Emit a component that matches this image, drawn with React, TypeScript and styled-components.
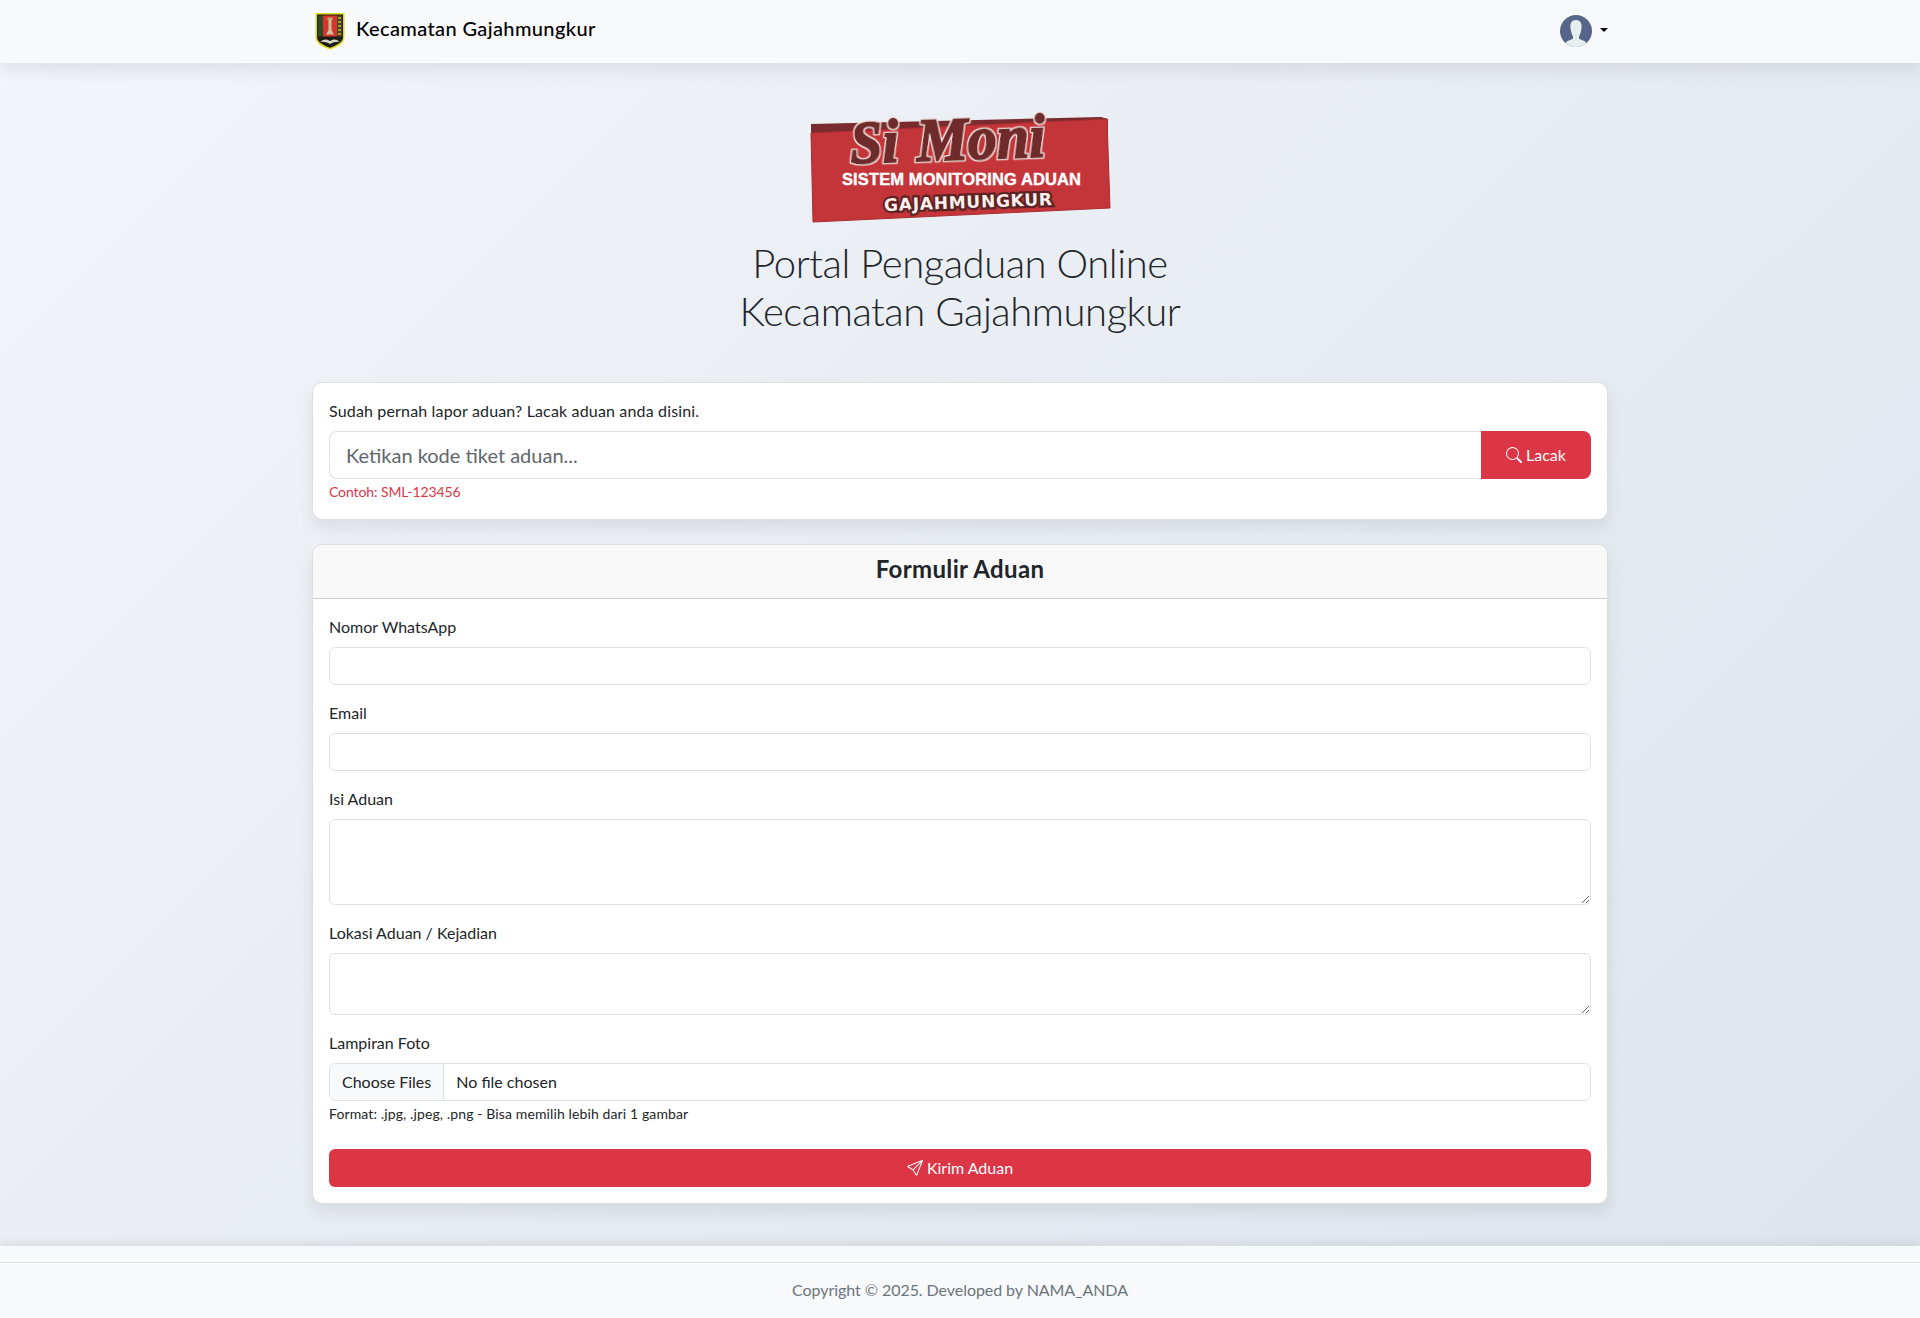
import { createGlobalStyle, styled } from "styled-components";
import { BsSearch, BsSend } from "react-icons/bs";

const GlobalStyle = createGlobalStyle`
  * { box-sizing: border-box; }
  html, body { margin: 0; padding: 0; }
  body {
    min-height: 1318px;
    font-family: Lato, "Noto Sans", sans-serif;
    font-size: 16px;
    line-height: 24px;
    color: #212529;
    background: linear-gradient(135deg, #f2f5f9 0%, #dde4ec 100%);
  }
  input, textarea, button { font-family: inherit; letter-spacing: inherit; }
`;

const Navbar = styled.nav`
  height: 63px;
  background: #f8f9fa;
  box-shadow: 0 8px 16px rgba(0, 0, 0, 0.08);
`;

const NavInner = styled.div`
  width: 1320px;
  height: 100%;
  margin: 0 auto;
  padding: 0 12px 0 15px;
  display: flex;
  align-items: center;
  justify-content: space-between;
`;

const Brand = styled.a`
  display: flex;
  align-items: center;
  gap: 11px;
  font-size: 20px;
  font-weight: 500;
  letter-spacing: 0.38px;
  color: #000;
  margin-bottom: 2px;
`;

const BrandName = styled.span`
  margin-bottom: 6px;
`;

const UserMenu = styled.div`
  display: flex;
  align-items: center;
  gap: 8px;
  margin-bottom: 2px;
`;

const Caret = styled.span`
  width: 0;
  height: 0;
  margin-bottom: 2px;
  border-top: 4.8px solid #000;
  border-left: 4.8px solid transparent;
  border-right: 4.8px solid transparent;
`;

const Main = styled.main`
  width: 1320px;
  margin: 0 auto;
  padding: 37px 12px 42px;
`;

const Hero = styled.header`
  display: flex;
  flex-direction: column;
  align-items: center;
  margin-bottom: 46px;
`;

const Title = styled.h1`
  margin: 9px 0 1px;
  font-size: 40px;
  line-height: 48px;
  font-weight: 300;
  letter-spacing: -0.45px;
  text-align: center;
`;

const Card = styled.section`
  background: #fff;
  border: 1px solid rgba(0, 0, 0, 0.125);
  border-radius: 10px;
  box-shadow: 0 8px 16px rgba(0, 0, 0, 0.08);
  overflow: hidden;
  & + & { margin-top: 24px; }
`;

const CardHeader = styled.div`
  height: 54px;
  padding-bottom: 6px;
  background: #f8f8f8;
  border-bottom: 1px solid rgba(0, 0, 0, 0.175);
  display: flex;
  align-items: center;
  justify-content: center;
`;

const CardTitle = styled.h2`
  margin: 0;
  font-size: 24px;
  font-weight: 700;
  letter-spacing: 0.35px;
  line-height: 29px;
`;

const CardBody = styled.div`
  padding: 16px;
`;

const Label = styled.label`
  display: block;
  margin-bottom: 8px;
`;

const IntroLabel = styled(Label)`
  letter-spacing: 0.16px;
`;

const Field = styled.div`
  margin-bottom: 16px;
`;

const SearchGroup = styled.div`
  display: flex;
  height: 48px;
`;

const SearchInput = styled.input`
  flex: 1;
  min-width: 0;
  padding: 8px 16px;
  font-size: 20px;
  color: #212529;
  border: 1px solid #dee2e6;
  border-right: 0;
  border-radius: 8px 0 0 8px;
  background: #fff;
  outline: none;
  &::placeholder { color: #5f666c; opacity: 1; }
`;

const SearchButton = styled.button`
  width: 110px;
  padding: 0 0 1px;
  display: flex;
  align-items: center;
  justify-content: center;
  gap: 4px;
  border: 0;
  border-radius: 0 8px 8px 0;
  background: #dc3545;
  color: #fff;
  font-size: 16px;
`;

const Hint = styled.small<{ $danger?: boolean }>`
  display: block;
  margin: 3px 0 2px;
  font-size: 14px;
  line-height: 19px;
  letter-spacing: ${p => (p.$danger ? "-0.1px" : "0.12px")};
  color: ${p => (p.$danger ? "#dc3545" : "#212529")};
`;

const Input = styled.input`
  display: block;
  width: 100%;
  height: 38px;
  padding: 6px 12px;
  font-size: 16px;
  color: #212529;
  background: #fff;
  border: 1px solid #dee2e6;
  border-radius: 6px;
  outline: none;
`;

const TextArea = styled.textarea<{ $height: number }>`
  display: block;
  width: 100%;
  height: ${p => p.$height}px;
  padding: 6px 12px;
  font-size: 16px;
  color: #212529;
  background: #fff;
  border: 1px solid #dee2e6;
  border-radius: 6px;
  outline: none;
  resize: vertical;
`;

const FileInput = styled.input`
  display: block;
  width: 100%;
  height: 38px;
  padding: 6px 12px;
  font-size: 16px;
  line-height: 24px;
  color: #212529;
  background: #fff;
  border: 1px solid #dee2e6;
  border-radius: 6px;
  overflow: hidden;
  outline: none;
  &::file-selector-button {
    height: 38px;
    margin: -7px 12px -6px -12px;
    padding: 6px 12px;
    color: #212529;
    background: #f8f9fa;
    border: 0;
    border-right: 1px solid #dee2e6;
    border-radius: 0;
    font: inherit;
    letter-spacing: inherit;
  }
`;

const SubmitButton = styled.button`
  width: 100%;
  height: 38px;
  margin-top: 26px;
  padding: 0 0 1px;
  display: flex;
  align-items: center;
  justify-content: center;
  gap: 4px;
  border: 0;
  border-radius: 6px;
  background: #dc3545;
  color: #fff;
  font-size: 16px;
`;

const Footer = styled.footer`
  height: 73px;
  padding-top: 16px;
  background: #f8f9fa;
  box-shadow: 0 -3px 10px rgba(0, 0, 0, 0.08);
`;

const FooterText = styled.div`
  height: 57px;
  padding-bottom: 2px;
  border-top: 1px solid #dee2e6;
  display: flex;
  align-items: center;
  justify-content: center;
  letter-spacing: -0.06px;
  color: #6c757d;
`;

function Crest() {
  return (
    <svg width="30" height="38" viewBox="0 0 30 38">
      <path d="M0.5 1H29.5V25C29.5 32 22 35 15 37.5C8 35 0.5 32 0.5 25Z" fill="#e2dc1e" />
      <path d="M2 2.5H28V25C28 30.5 21 33.5 15 35.8C9 33.5 2 30.5 2 25Z" fill="#1c1c18" />
      <rect x="3" y="3.5" width="5" height="21" fill="#2f4a26" />
      <rect x="22" y="3.5" width="5" height="21" fill="#4a4420" />
      <path d="M23 6H26M23 10H26M23 14H26M23 18H26M23 22H26" stroke="#c8b040" strokeWidth="1.4" />
      <rect x="8" y="3.5" width="14" height="21" fill="#d8352a" />
      <path d="M13.5 8H16.5V18L19 22.5H11L13.5 18Z" fill="#c9c2a4" />
      <rect x="12.5" y="5.5" width="5" height="2.5" fill="#b8ae88" />
      <path d="M5 30C9 26.5 12 27 15 29C18 27 21 26.5 25 30C21 29.5 18 30.5 15 32C12 30.5 9 29.5 5 30Z" fill="#d8d8c8" />
    </svg>
  );
}

function Avatar() {
  return (
    <svg width="32" height="32" viewBox="0 0 32 32">
      <defs>
        <clipPath id="avatar-clip"><circle cx="16" cy="16" r="16" /></clipPath>
      </defs>
      <circle cx="16" cy="16" r="16" fill="#56658a" />
      <g clipPath="url(#avatar-clip)" fill="#e7eeee">
        <path d="M16 5C11.8 5 10.2 8 10.4 12C10.6 16 12 20 13 21.5V23.5C11 25 7 25.5 5.5 28V32H26.5V28C25 25.5 21 25 19 23.5V21.5C20 20 21.4 16 21.6 12C21.8 8 20.2 5 16 5Z" />
      </g>
    </svg>
  );
}

const LogoName = styled.text`
  font-family: "Liberation Serif", serif;
  font-size: 62px;
  font-style: italic;
  font-weight: 700;
  word-spacing: 4px;
  fill: #6f2a2c;
  stroke: #6f2a2c;
  stroke-width: 2.4px;
  filter: url(#logo-outline);
`;

const LogoLine = styled.text`
  font-family: "Liberation Sans", sans-serif;
  font-size: 16.5px;
  font-weight: 700;
  fill: #fff;
  stroke: #fff;
  stroke-width: 0.4px;
`;

const LogoPlace = styled.text`
  font-family: "DejaVu Sans", sans-serif;
  font-size: 17px;
  font-weight: 700;
  fill: #fdf0ec;
  stroke: #5e2425;
  stroke-width: 4.5px;
  paint-order: stroke;
`;

function Logo() {
  return (
    <svg width="340" height="130" viewBox="0 0 340 130">
      <defs>
        <filter id="logo-outline" x="-10%" y="-10%" width="120%" height="120%">
          <feMorphology in="SourceAlpha" operator="dilate" radius="1.3" result="grown" />
          <feFlood floodColor="#fbe6e2" />
          <feComposite in2="grown" operator="in" result="edge" />
          <feMerge>
            <feMergeNode in="edge" />
            <feMergeNode in="SourceGraphic" />
          </feMerge>
        </filter>
      </defs>
      <polygon points="21,24 311,17 318,19 318,40 21,40" fill="#7a2b2e" />
      <polygon points="21,33 317,19 320,108 23,122" fill="#c4353a" stroke="#a82d33" strokeWidth="1" />
      <LogoName x="60" y="60" textLength="195" lengthAdjust="spacingAndGlyphs" transform="rotate(-2 155 40)">
        Si Moni
      </LogoName>
      <LogoLine x="52" y="85" textLength="239">SISTEM MONITORING ADUAN</LogoLine>
      <LogoPlace x="94" y="108" textLength="168" transform="rotate(-2 178 102)">GAJAHMUNGKUR</LogoPlace>
    </svg>
  );
}

export default function App() {
  return (
    <>
      <GlobalStyle />
      <Navbar>
        <NavInner>
          <Brand>
            <Crest />
            <BrandName>Kecamatan Gajahmungkur</BrandName>
          </Brand>
          <UserMenu>
            <Avatar />
            <Caret />
          </UserMenu>
        </NavInner>
      </Navbar>
      <Main>
        <Hero>
          <Logo />
          <Title>
            Portal Pengaduan Online
            <br />
            Kecamatan Gajahmungkur
          </Title>
        </Hero>
        <Card>
          <CardBody>
            <IntroLabel>Sudah pernah lapor aduan? Lacak aduan anda disini.</IntroLabel>
            <SearchGroup>
              <SearchInput placeholder="Ketikan kode tiket aduan..." />
              <SearchButton>
                <BsSearch size={16} />
                Lacak
              </SearchButton>
            </SearchGroup>
            <Hint $danger>Contoh: SML-123456</Hint>
          </CardBody>
        </Card>
        <Card>
          <CardHeader>
            <CardTitle>Formulir Aduan</CardTitle>
          </CardHeader>
          <CardBody>
            <Field>
              <Label>Nomor WhatsApp</Label>
              <Input type="text" />
            </Field>
            <Field>
              <Label>Email</Label>
              <Input type="email" />
            </Field>
            <Field>
              <Label>Isi Aduan</Label>
              <TextArea $height={86} />
            </Field>
            <Field>
              <Label>Lokasi Aduan / Kejadian</Label>
              <TextArea $height={62} />
            </Field>
            <Label>Lampiran Foto</Label>
            <FileInput type="file" multiple />
            <Hint>Format: .jpg, .jpeg, .png - Bisa memilih lebih dari 1 gambar</Hint>
            <SubmitButton>
              <BsSend size={16} />
              Kirim Aduan
            </SubmitButton>
          </CardBody>
        </Card>
      </Main>
      <Footer>
        <FooterText>Copyright © 2025. Developed by NAMA_ANDA</FooterText>
      </Footer>
    </>
  );
}
